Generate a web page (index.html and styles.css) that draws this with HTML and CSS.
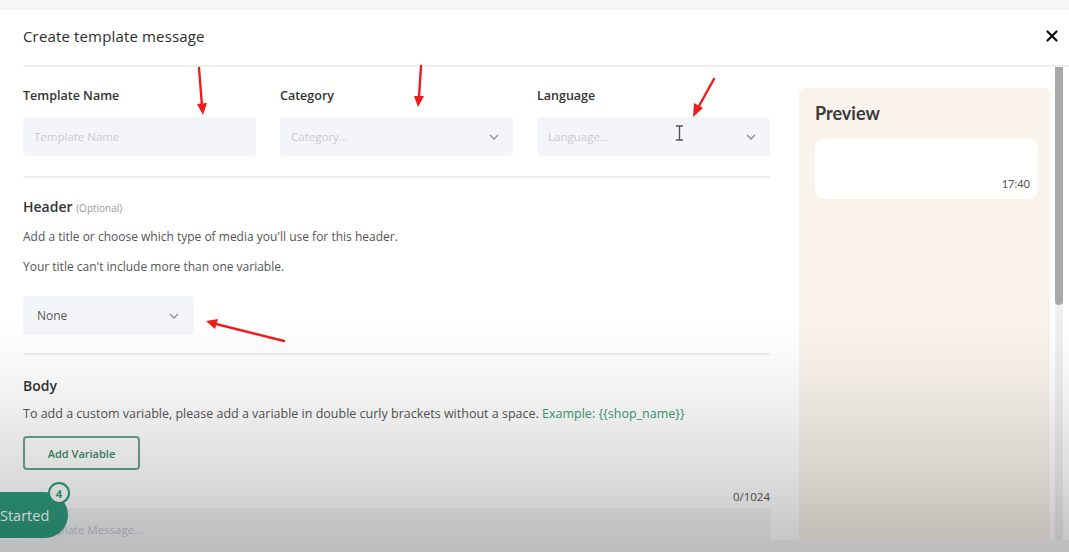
FILE: index.html
```html
<!DOCTYPE html>
<html lang="en">
<head>
  <meta charset="UTF-8" />
  <title>Create template message</title>
  <link rel="stylesheet" href="styles.css">
</head>
<body>

  <div class="modal">
    <div class="modalHead">
      <div class="modalTitle">Create template message</div>
      <svg class="closeIcon" width="12" height="12" viewBox="0 0 12 12">
        <path d="M1.5 1.5 L10.5 10.5 M10.5 1.5 L1.5 10.5" stroke="#111" stroke-width="2.2" stroke-linecap="round"/>
      </svg>
    </div>

    <div class="modalBody">
      <div class="formCol">
        <div class="fieldRow">
          <div class="field">
            <div class="label">Template Name</div>
            <div class="input"><span class="placeholder">Template Name</span></div>
          </div>
          <div class="field">
            <div class="label">Category</div>
            <div class="input">
              <span class="placeholder">Category...</span>
              <svg class="chevron" width="10" height="6" viewBox="0 0 10 6"><path d="M1 1 L5 5 L9 1" fill="none" stroke="#8a8d94" stroke-width="1.3"/></svg>
            </div>
          </div>
          <div class="field">
            <div class="label">Language</div>
            <div class="input">
              <span class="placeholder">Language...</span>
              <svg class="chevron" width="10" height="6" viewBox="0 0 10 6"><path d="M1 1 L5 5 L9 1" fill="none" stroke="#8a8d94" stroke-width="1.3"/></svg>
            </div>
          </div>
        </div>

        <div class="divider"></div>

        <div class="sectionTitle">Header <span class="optional">(Optional)</span></div>
        <p class="hint">Add a title or choose which type of media you'll use for this header.</p>
        <p class="hint">Your title can't include more than one variable.</p>

        <div class="input headerSelect">
          <span class="value">None</span>
          <svg class="chevron" width="10" height="6" viewBox="0 0 10 6"><path d="M1 1 L5 5 L9 1" fill="none" stroke="#8a8d94" stroke-width="1.3"/></svg>
        </div>

        <div class="divider"></div>

        <div class="sectionTitle bodyTitle">Body</div>
        <p class="hint bodyHint">To add a custom variable, please add a variable in double curly brackets without a space. <span class="example">Example: {{shop_name}}</span></p>

        <button class="addVariable">Add Variable</button>

        <div class="counterText">0/1024</div>
        <div class="textarea"><span class="placeholder">Template Message...</span></div>
      </div>

      <div class="preview">
        <div class="previewTitle">Preview</div>
        <div class="bubble"><span class="time">17:40</span></div>
      </div>

      <div class="scrollbar"><div class="thumb"></div></div>
    </div>
  </div>

  <div class="startedPill">
    Started
    <span class="badge">4</span>
  </div>

  <div class="shade"></div>

  <svg class="marks" width="1069" height="552" viewBox="0 0 1069 552">
    <g stroke="#ee1c1c" stroke-width="2.4" fill="#ee1c1c" stroke-linecap="round">
      <line x1="199" y1="68" x2="202" y2="106"/>
      <polygon points="197,104 207,103 203,115" stroke="none"/>
      <line x1="421" y1="66" x2="419" y2="97"/>
      <polygon points="414,96 424,96 418,107" stroke="none"/>
      <line x1="714" y1="79" x2="699" y2="106"/>
      <polygon points="694,103 703,108 693,117" stroke="none"/>
      <line x1="284" y1="341" x2="216" y2="324"/>
      <polygon points="218,319 215,329 206,321" stroke="none"/>
    </g>
    <g stroke="#555" stroke-width="1.4" fill="none">
      <path d="M676 126 H683 M679.5 126 V140 M676 140 H683"/>
    </g>
  </svg>

</body>
</html>
```

FILE: styles.css
```css
body {
  margin: 0;
  padding: 10px 0 0 0;
  background-color: #f6f6f6;
  font-family: "Open Sans", "Noto Sans", sans-serif;
  color: #333;
  overflow: hidden;
  height: 552px;
  box-sizing: border-box;
}

.modal {
  background-color: #fff;
  height: 530px;
  display: flex;
  flex-direction: column;
}

.modalHead {
  display: flex;
  align-items: center;
  justify-content: space-between;
  height: 57px;
  padding: 0 9px 4px 0;
  box-sizing: border-box;
  border-bottom: 2px solid #eeeeee;
  margin-left: 23px;
}

.modalTitle {
  font-size: 15px;
  font-weight: 500;
  color: #2e2e2e;
  letter-spacing: 0.15px;
}

.closeIcon {
  margin-right: 2px;
}

.modalBody {
  display: flex;
  flex: 1;
  min-height: 0;
}

.formCol {
  width: 747px;
  margin-left: 23px;
  padding-top: 20px;
  display: flex;
  flex-direction: column;
}

.fieldRow {
  display: flex;
  gap: 24px;
}

.field {
  width: 233px;
}

.label {
  font-size: 12.5px;
  font-weight: 600;
  color: #333;
  line-height: 18px;
  margin-bottom: 12px;
}

.input {
  height: 39px;
  background-color: #f4f5f8;
  border-radius: 4px;
  display: flex;
  align-items: center;
  justify-content: space-between;
  padding: 0 14px 0 11px;
  box-sizing: border-box;
}

.placeholder {
  font-size: 11.5px;
  color: #c7cad1;
}

.chevron {
  display: block;
}

.divider {
  height: 2px;
  background-color: #efefef;
  margin-top: 20px;
}

.sectionTitle {
  margin-top: 19px;
  font-size: 14px;
  font-weight: 600;
  line-height: 20px;
  color: #333;
}

.bodyTitle {
  margin-top: 21px;
}

.optional {
  font-size: 10px;
  font-weight: 400;
  color: #999;
}

.hint {
  margin: 10px 0 0 0;
  font-size: 12px;
  line-height: 18px;
  color: #555;
}

.hint + .hint {
  margin-top: 12px;
}

.bodyHint {
  font-size: 12.5px;
  margin-top: 9px;
}

.example {
  color: #3a9a76;
}

.headerSelect {
  margin-top: 20px;
  width: 171px;
  padding: 0 15px 0 14px;
}

.headerSelect .value {
  font-size: 12px;
  color: #555;
}

.headerSelect + .divider {
  margin-top: 18px;
}

.addVariable {
  align-self: flex-start;
  margin-top: 13px;
  width: 117px;
  height: 34px;
  background-color: #fff;
  border: 2px solid #6aa28c;
  border-radius: 4px;
  color: #3d8a6c;
  font-family: "Open Sans", "Noto Sans", sans-serif;
  font-size: 11px;
  font-weight: 600;
}

.counterText {
  margin-top: 19px;
  text-align: right;
  font-size: 11.5px;
  line-height: 16px;
  color: #555;
}

.textarea {
  margin-top: 3px;
  flex: 1;
  background-color: #f4f5f8;
  border-radius: 4px 4px 0 0;
  padding: 9px 0 0 11px;
}

.preview {
  width: 251px;
  margin: 21px 0 0 29px;
  background-color: #f9f3ec;
  border-radius: 6px 6px 0 0;
  padding: 13px 12px 0 16px;
  box-sizing: border-box;
}

.previewTitle {
  font-family: "Lato", sans-serif;
  font-size: 18px;
  font-weight: 700;
  color: #3a3a3a;
  line-height: 24px;
}

.bubble {
  margin-top: 14px;
  height: 60px;
  background-color: #fff;
  border-radius: 9px;
  display: flex;
  align-items: flex-end;
  justify-content: flex-end;
  padding: 0 8px 9px 0;
  box-sizing: border-box;
}

.time {
  font-family: "Lato", sans-serif;
  font-size: 11px;
  color: #555;
}

.scrollbar {
  width: 8px;
  margin-left: 5px;
  background-color: #efefef;
}

.thumb {
  height: 238px;
  background-color: #a9a9a9;
  border-radius: 0 0 4px 4px;
}

.startedPill {
  position: absolute;
  left: -20px;
  top: 492px;
  width: 88px;
  height: 46px;
  box-sizing: border-box;
  padding-left: 20px;
  background-color: #2f9d80;
  border-radius: 0 23px 23px 0;
  color: #fff;
  font-size: 14.5px;
  font-weight: 500;
  display: flex;
  align-items: center;
}

.badge {
  position: absolute;
  right: -2px;
  top: -10px;
  width: 18px;
  height: 18px;
  border-radius: 50%;
  background-color: #fff;
  border: 2px solid #2f9d80;
  color: #2f9d80;
  font-size: 11px;
  font-weight: 700;
  display: flex;
  align-items: center;
  justify-content: center;
}

.shade {
  position: absolute;
  left: 0;
  top: 0;
  width: 100%;
  height: 100%;
  pointer-events: none;
  background: linear-gradient(to bottom, rgba(0,0,0,0) 0, rgba(0,0,0,0) 320px, rgba(0,0,0,0.04) 380px, rgba(0,0,0,0.13) 470px, rgba(0,0,0,0.24) 552px);
}

.marks {
  position: absolute;
  left: 0;
  top: 0;
  pointer-events: none;
}
```
